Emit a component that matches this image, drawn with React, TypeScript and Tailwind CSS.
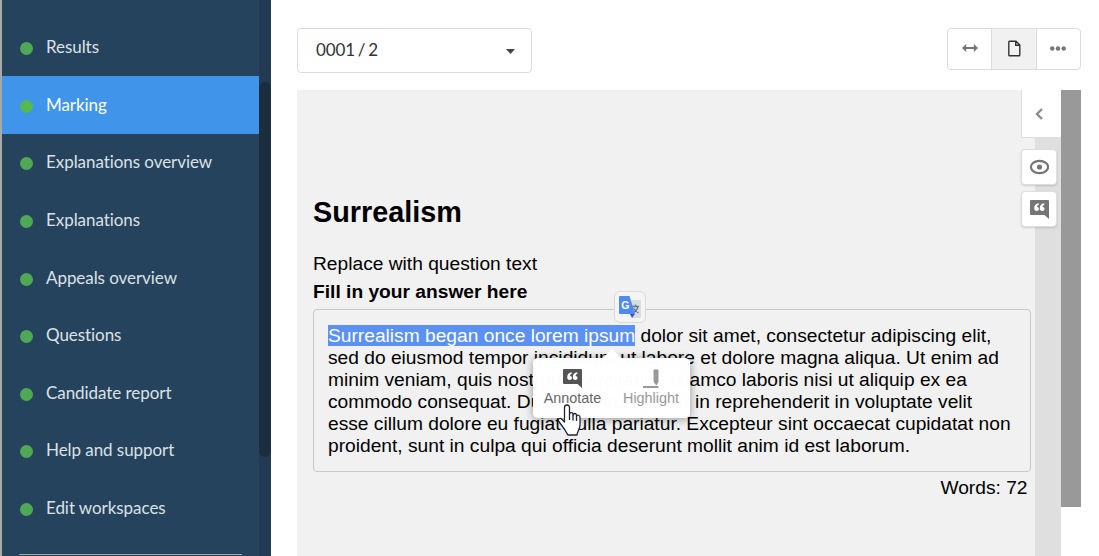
import type { ReactNode } from 'react';
import clsx from 'clsx';

const menuItems = [
  'Results',
  'Marking',
  'Explanations overview',
  'Explanations',
  'Appeals overview',
  'Questions',
  'Candidate report',
  'Help and support',
  'Edit workspaces',
];

const answerLines = [
  'sed do eiusmod tempor incididunt ut labore et dolore magna aliqua. Ut enim ad',
  'minim veniam, quis nostrud exercitation ullamco laboris nisi ut aliquip ex ea',
  'commodo consequat. Duis aute irure dolor in reprehenderit in voluptate velit',
  'esse cillum dolore eu fugiat nulla pariatur. Excepteur sint occaecat cupidatat non',
  'proident, sunt in culpa qui officia deserunt mollit anim id est laborum.',
];

const QuoteIcon = ({ className }: { className?: string }) => (
  <svg viewBox="0 0 19 19" className={className}>
    <path d="M1 0H18Q19 0 19 1V19L14.500 15H1Q0 15 0 14V1Q0 0 1 0Z" fill="currentColor" />
    <path
      d="M8.600 3.300C5.900 3.700 4.200 5.400 4.200 8.200C4.200 9.900 5.100 10.900 6.700 10.900C8 10.900 8.900 10.100 8.900 8.900C8.900 7.700 8.100 7 7 7C7.200 5.900 7.700 5 8.900 4.500ZM14.200 3.300C11.500 3.700 9.800 5.400 9.800 8.200C9.800 9.900 10.700 10.900 12.300 10.900C13.600 10.900 14.500 10.100 14.500 8.900C14.500 7.700 13.700 7 12.600 7C12.800 5.900 13.300 5 14.500 4.500Z"
      fill="white"
    />
  </svg>
);

const SideButton = ({ children }: { children: ReactNode }) => (
  <button className="flex h-9 w-9 items-center justify-center rounded border border-[#dedede] bg-white text-[#757575] shadow-[0_1px_2px_rgba(0,0,0,0.15)]">
    {children}
  </button>
);

const Sidebar = () => (
  <aside className="flex w-[271px] shrink-0 border-l-2 border-[#a9a9a9] bg-[#26435d] font-['Lato',sans-serif]">
    <div className="w-[257px] pt-[18.4px]">
      {menuItems.map(item => (
        <div
          key={item}
          className={clsx(
            'flex h-[57.6px] items-center pl-[18px] text-[17px] tracking-[-0.06px]',
            item === 'Marking' ? 'bg-[#4094ea] text-white' : 'text-[#dbe1e6]'
          )}
        >
          <span
            className={clsx(
              'mt-[3px] mr-[13px] h-[13px] w-[13px] rounded-full',
              item === 'Marking' ? 'bg-[#54b951]' : 'bg-[#4fa954]'
            )}
          />
          <span className="mb-[0.3px] whitespace-nowrap">{item}</span>
        </div>
      ))}
      <div className="mt-[17px] mr-[17px] ml-[17px] h-px bg-[#a9a49d]" />
    </div>
    <div className="w-3 bg-[#233b52] pt-[82px]">
      <div className="h-[375px] rounded-full bg-[#1b2d3e]" />
    </div>
  </aside>
);

const Toolbar = () => (
  <div className="flex h-[62px] items-start justify-between">
    <button className="flex h-[45px] w-[235px] items-center justify-between rounded border border-[#dcdcdc] pr-4 pl-[18px] font-['Lato',sans-serif] text-[17px] text-[#333]">
      <span className="pb-[2px] tracking-[-0.1px] [word-spacing:-1.500px]">0001 / 2</span>
      <svg width="9" height="5" viewBox="0 0 9 5" className="mt-px">
        <path d="M0 0H9L4.500 5Z" fill="#444" />
      </svg>
    </button>
    <div className="flex h-[42px] w-[134px] overflow-hidden rounded border border-[#dcdcdc] text-[#757575]">
      <button className="flex w-11 items-center justify-center border-r border-[#dcdcdc] pb-[2px]">
        <svg width="16" height="8" viewBox="0 0 16 8">
          <path d="M0 4L4.200 0V3H11.800V0L16 4L11.800 8V5H4.200V8Z" fill="currentColor" />
        </svg>
      </button>
      <button className="flex w-[45px] items-center justify-center border-r border-[#dcdcdc] bg-[#f1f1f1] pb-px text-[#333]">
        <svg width="13" height="17" viewBox="0 0 13 17" fill="none" stroke="currentColor" strokeWidth="1.4">
          <path d="M1.500 1.200H8L11.800 5V15Q11.800 15.800 11 15.800H1.500Q.8 15.800 .8 15V2Q.8 1.200 1.500 1.200ZM7.700 1.200V5.200H11.800" />
        </svg>
      </button>
      <button className="flex flex-1 items-center justify-center pr-px pb-[2px]">
        <svg width="16" height="5" viewBox="0 0 16 5" fill="currentColor">
          <circle cx="2.300" cy="2.500" r="2.200" />
          <circle cx="8" cy="2.500" r="2.200" />
          <circle cx="13.700" cy="2.500" r="2.200" />
        </svg>
      </button>
    </div>
  </div>
);

const TranslateBadge = () => (
  <div className="absolute top-[-19px] left-[300px] flex h-8 w-8 items-center justify-center rounded-md border border-[#dadada] bg-[#f4f4f4]">
    <svg width="24" height="24" viewBox="0 0 24 24">
      <path d="M10 5H22Q23 5 23 6V22Q23 23 22 23H14Z" fill="#dadce0" />
      <path d="M14 11.500H21M17.500 9.500V11.500M20 11.500Q19 16 14.500 18M15.500 13Q17 16.500 20.500 18" fill="none" stroke="#607988" strokeWidth="1.300" />
      <path d="M12 19H16.800L14 23Z" fill="#3a51b3" />
      <path d="M2 1H11.500L17 19H2Q1 19 1 18V2Q1 1 2 1Z" fill="#4f8af4" />
      <text x="3.200" y="14" fontSize="10.500" fontWeight="700" fontFamily="Liberation Sans, sans-serif" fill="white">G</text>
    </svg>
  </div>
);

const AnnotationPopup = () => (
  <div className="absolute top-[48px] left-[219px] flex h-[60px] w-[157px] rounded-[5px] bg-white/99 text-[14.4px] leading-4 shadow-[0_1px_8px_rgba(0,0,0,0.4)]">
    <svg width="18" height="9" viewBox="0 0 18 9" className="absolute top-[-9px] left-[70px]">
      <path d="M0 9L9 0L18 9Z" fill="white" />
    </svg>
    <button className="flex w-[79px] flex-col items-center pt-[11px] text-[#666]">
      <QuoteIcon className="mb-[2px] h-[19px] w-[19px] text-[#555]" />
      Annotate
    </button>
    <button className="flex w-[78px] flex-col items-center pt-[11px] text-[#999]">
      <svg width="17" height="19" viewBox="0 0 17 19" fill="currentColor" className="mb-[2px]">
        <path d="M10.500 1Q13 -.5 15.500 1V13L13.500 16.500Q10.500 14.500 10.500 11.500ZM0 17H15.500V19H0Z" />
      </svg>
      Highlight
    </button>
    <svg width="25" height="34" viewBox="0 0 25 34" className="absolute top-[46px] left-[24px]">
      <path
        d="M10 1C8.500 1 7.500 2 7.500 3.500V18L4.500 15C3 13.500 .5 15 1.500 17L8 26C9 28 9.500 29 11 31H20C20 28 23 25 23 21V13.500C23 11 20.500 10.500 19.500 12V11C19 9 16.500 9 16 11V10C15.500 8 13 8.500 12.500 10V3.500C12.500 2 11.500 1 10 1Z"
        fill="white"
        stroke="#222533"
        strokeWidth="1.300"
        strokeLinejoin="round"
      />
      <path d="M12.500 10V16M16 11V16.500M19.500 12V17" stroke="#222533" strokeWidth="1.300" />
    </svg>
  </div>
);

const AnswerBox = () => (
  <div className="relative h-[163px] w-[718px] rounded border border-[#c8c8c8] pt-[15px] pl-[14px] text-[19.2px] leading-[22px] whitespace-nowrap">
    <p>
      <span className="bg-[#5a91f3] text-white">Surrealism began once lorem ipsum</span> dolor sit amet, consectetur adipiscing elit,
    </p>
    {answerLines.map(line => (
      <p key={line}>{line}</p>
    ))}
    <TranslateBadge />
    <AnnotationPopup />
  </div>
);

export default function App() {
  return (
    <div className="flex h-[556px] w-[1099px] overflow-hidden bg-white">
      <Sidebar />
      <main className="flex-1 pt-7 pr-[18px] pl-[26px]">
        <Toolbar />
        <div className="relative flex h-[466px]">
          <div className="w-[738px] bg-[#f1f1f1] pt-[105px] pl-4 font-['Liberation_Sans',Arial,sans-serif] text-black">
            <h1 className="text-[28.8px] leading-[34px] font-bold">Surrealism</h1>
            <p className="mt-[24px] text-[19.2px] leading-[22px]">Replace with question text</p>
            <p className="mt-[6px] mb-[6px] text-[19.2px] leading-[22px] font-bold">Fill in your answer here</p>
            <AnswerBox />
            <p className="mt-[5px] pr-[7.500px] text-right text-[19.2px] leading-[22px]">Words: 72</p>
          </div>
          <div className="w-[26px] bg-[#dfdfdf]" />
          <div className="h-[417px] w-5 bg-[#999]" />
          <div className="absolute top-0 right-5 flex flex-col">
            <button className="mb-[11px] flex h-12 w-10 items-center justify-center rounded-b-xs border-b border-l border-[#dedede] bg-white pr-[5px] text-[#8c8c8c]">
              <svg width="8" height="12" viewBox="0 0 8 12" fill="none" stroke="currentColor" strokeWidth="2.400">
                <path d="M7 1L2 6L7 11" />
              </svg>
            </button>
            <div className="flex flex-col gap-[6px]">
              <SideButton>
                <svg width="20" height="16" viewBox="0 0 20 16" fill="none" stroke="currentColor" strokeWidth="2.200">
                  <ellipse cx="10.500" cy="8" rx="8.600" ry="6.200" />
                  <circle cx="10.500" cy="8" r="2.600" fill="currentColor" stroke="none" />
                </svg>
              </SideButton>
              <SideButton>
                <QuoteIcon className="h-[19px] w-[19px]" />
              </SideButton>
            </div>
          </div>
        </div>
      </main>
    </div>
  );
}
